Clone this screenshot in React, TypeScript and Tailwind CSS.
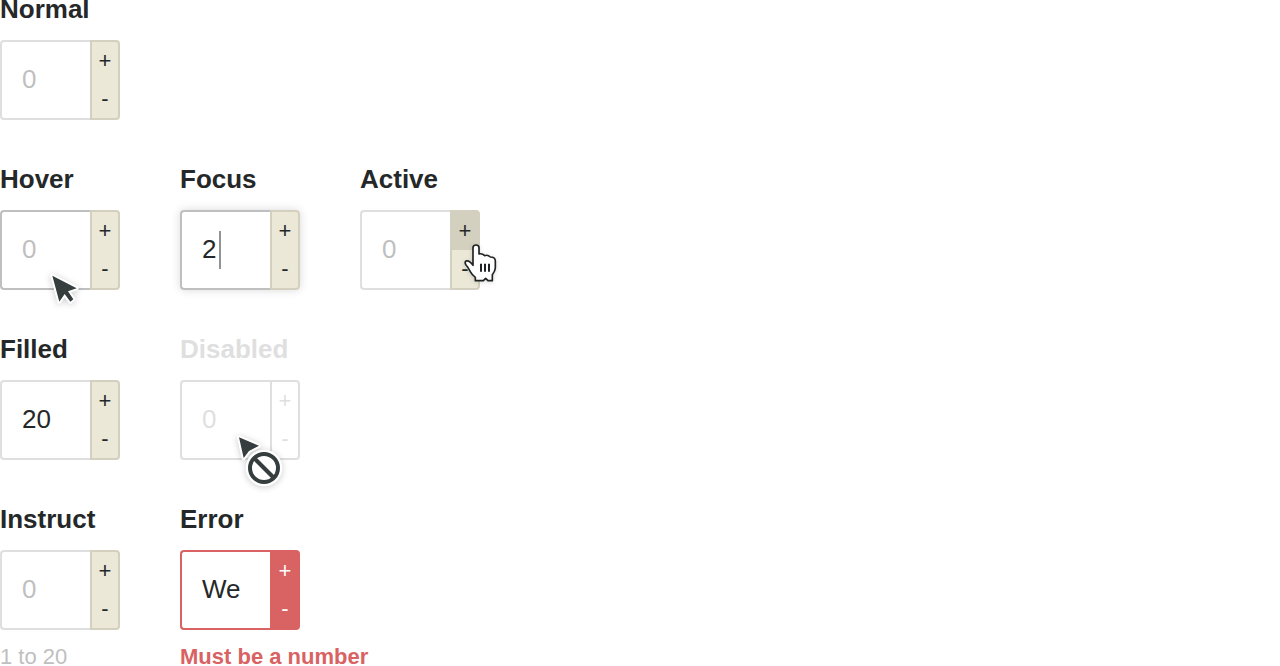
import type { ReactNode } from "react";

type Tone = "normal" | "hover" | "focus" | "active" | "disabled" | "error";

const inputTone: Record<Tone, string> = {
  normal: "border-[#dfdfdf]",
  hover: "border-[#bfbfbf]",
  focus: "border-[#bfbfbf]",
  active: "border-[#dfdfdf]",
  disabled: "border-[#dfdfdf] placeholder:text-[#dfdfdf]",
  error: "border-[#d96262]",
};

const normalStepper = "border-[#d4d0bf] bg-[#ebe8d8] text-[#252829]";

const stepperTone: Record<Tone, string> = {
  normal: normalStepper,
  hover: normalStepper,
  focus: normalStepper,
  active: normalStepper,
  disabled: "border-[#dfdfdf] bg-white text-[#dfdfdf]",
  error: "border-[#d96262] bg-[#d96262] text-white",
};

interface FieldProps {
  label: string;
  tone?: Tone;
  value?: string;
  hint?: string;
  children?: ReactNode;
}

function NumberField({ label, tone = "normal", value, hint, children }: FieldProps) {
  const id = label.toLowerCase();
  const disabled = tone === "disabled";
  return (
    <div className="w-[120px]">
      <label
        htmlFor={id}
        className={`mb-[22px] block text-[26px] leading-[18px] font-bold ${disabled ? "text-[#dfdfdf]" : ""}`}
      >
        {label}
      </label>
      <div
        className={`relative flex h-20 rounded ${tone === "focus" ? "shadow-[0_0_10px_rgba(0,0,0,0.15)]" : ""}`}
      >
        <input
          id={id}
          type="text"
          inputMode="numeric"
          placeholder="0"
          defaultValue={value}
          disabled={disabled}
          aria-invalid={tone === "error"}
          aria-describedby={hint ? `${id}-hint` : undefined}
          className={`min-w-0 flex-1 rounded-l border-2 border-r-0 bg-white pb-0.5 pl-5 text-[26px] outline-none placeholder:text-[#bfbfbf] ${inputTone[tone]}`}
        />
        <div
          className={`flex w-[30px] flex-col rounded-r border-2 text-[22px] leading-none ${stepperTone[tone]}`}
        >
          <button
            type="button"
            disabled={disabled}
            aria-label={`Increase ${label}`}
            className={`flex-1 ${tone === "active" ? "bg-[#d4d0bf]" : ""}`}
          >
            +
          </button>
          <button
            type="button"
            disabled={disabled}
            aria-label={`Decrease ${label}`}
            className="flex-1"
          >
            -
          </button>
        </div>
        {children}
      </div>
      {hint && (
        <p
          id={`${id}-hint`}
          className={`mt-4 text-[22px] leading-[22px] whitespace-nowrap ${tone === "error" ? "font-bold text-[#d96262]" : "text-[#bfbfbf]"}`}
        >
          {hint}
        </p>
      )}
    </div>
  );
}

function ArrowCursor() {
  return (
    <svg
      viewBox="0 0 120 120"
      aria-hidden="true"
      className="pointer-events-none absolute top-[60px] left-[45px] size-10 overflow-visible drop-shadow-[0_1px_3px_rgba(0,0,0,0.2)]"
    >
      <path
        d="M22 17 L95 55 L69 64 L85 88 L76 95 L59 72 L43 95 Z"
        fill="#363d3f"
        stroke="#fff"
        strokeWidth="12"
        strokeLinejoin="round"
        paintOrder="stroke"
      />
    </svg>
  );
}

function HandCursor() {
  return (
    <svg
      viewBox="0 0 150 165"
      aria-hidden="true"
      className="pointer-events-none absolute top-[25px] left-[95px] h-[55px] w-[50px] overflow-visible drop-shadow-[0_1px_2px_rgba(0,0,0,0.15)]"
    >
      <path
        d="M54 91 V38 Q54 30 63 30 Q72 30 72 38 V57 Q81 54 89 62 Q98 58 106 66 Q121 66 121 78 V98 Q121 107 112 119 V137 H99 L92 130 L85 137 H61 V127 Q52 121 46 110 Q40 97 33 90 Q28 82 33 78 Q43 75 54 91 Z"
        fill="#fff"
        stroke="#202324"
        strokeWidth="5"
        strokeLinejoin="round"
      />
      <path d="M78 86 V110 M90 86 V110 M102 86 V110" stroke="#202324" strokeWidth="6" />
    </svg>
  );
}

function ForbiddenCursor() {
  return (
    <svg
      viewBox="0 0 180 180"
      aria-hidden="true"
      className="pointer-events-none absolute top-[50px] left-[50px] size-[60px] overflow-visible drop-shadow-[0_1px_3px_rgba(0,0,0,0.2)]"
    >
      <path
        d="M27 22 L87 47 L57 63 L41 84 Z"
        fill="#363d3f"
        stroke="#fff"
        strokeWidth="12"
        strokeLinejoin="round"
        paintOrder="stroke"
      />
      <circle cx="102" cy="114" r="55" fill="#fff" />
      <circle cx="102" cy="114" r="42" fill="#fff" stroke="#363d3f" strokeWidth="12" />
      <path d="M72 84 L132 144" stroke="#363d3f" strokeWidth="12" />
    </svg>
  );
}

export default function App() {
  return (
    <main className="grid gap-[50px] overflow-hidden bg-white font-['Liberation_Sans',Arial,sans-serif] text-[#252829]">
      <div className="flex gap-[60px]">
        <NumberField label="Normal" />
      </div>
      <div className="flex gap-[60px]">
        <NumberField label="Hover" tone="hover">
          <ArrowCursor />
        </NumberField>
        <NumberField label="Focus" tone="focus" value="2">
          <span className="pointer-events-none absolute top-[21px] left-[39px] h-[38px] w-0.5 bg-[#929394]" />
        </NumberField>
        <NumberField label="Active" tone="active">
          <HandCursor />
        </NumberField>
      </div>
      <div className="flex gap-[60px]">
        <NumberField label="Filled" value="20" />
        <NumberField label="Disabled" tone="disabled">
          <ForbiddenCursor />
        </NumberField>
      </div>
      <div className="flex gap-[60px]">
        <NumberField label="Instruct" hint="1 to 20" />
        <NumberField label="Error" tone="error" value="We" hint="Must be a number" />
      </div>
    </main>
  );
}
